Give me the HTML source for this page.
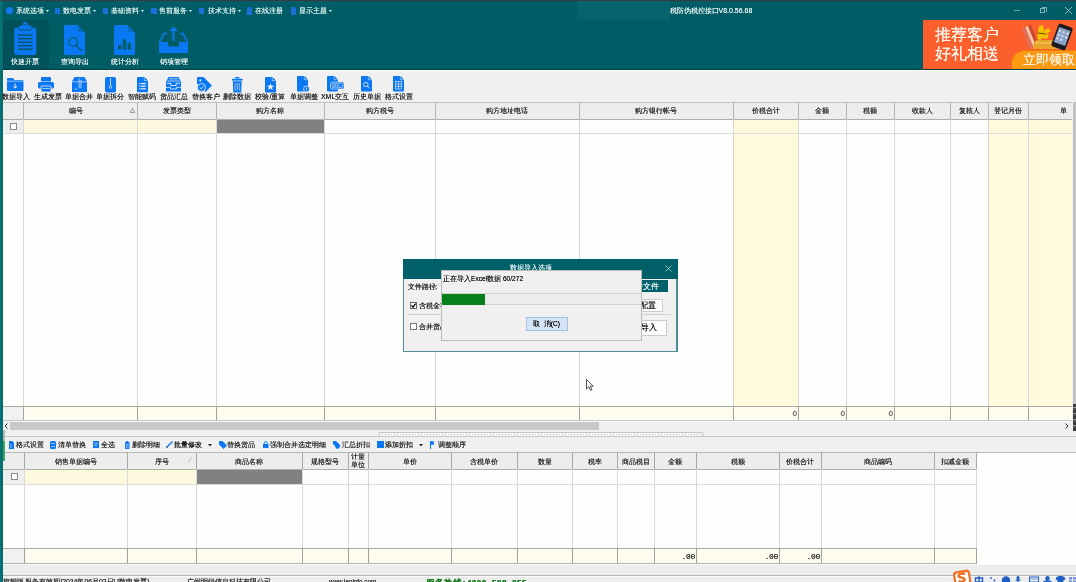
<!DOCTYPE html><html><head><meta charset="utf-8"><style>
html,body{margin:0;padding:0;}
body{width:1076px;height:582px;overflow:hidden;position:relative;background:#f0f0f0;font-family:"Liberation Sans",sans-serif;}
body div{position:absolute;box-sizing:border-box;}
#root{left:0;top:0;width:1076px;height:582px;overflow:hidden;will-change:transform;}
.t{white-space:nowrap;line-height:1;text-shadow:0 0 .4px;}
svg{position:absolute;overflow:visible;}
</style></head><body><div id="root">
<div style="left:0px;top:0px;width:1076px;height:70px;background:#005d66;"></div>
<div style="left:0px;top:0px;width:1076px;height:1px;background:#3a3b42;"></div>
<div style="left:577px;top:1px;width:93px;height:19px;background:#05646c;"></div>
<div style="left:0px;top:69px;width:1076px;height:1px;background:#003f46;"></div>
<div style="left:0px;top:70px;width:1076px;height:1px;background:#fbfbfb;"></div>
<div style="left:6px;top:7px;width:7px;height:7px;background:#0d7af6;border-radius:50%;"></div>
<div class="t" style="left:15.5px;top:6.5px;font-size:7px;color:#d2eaea;">系统选项</div>
<svg style="left:45.5px;top:10px" width="3" height="2"><path d="M0 0H3L1.5 2Z" fill="#e6f2f2"/></svg>
<div style="left:54.5px;top:8px;width:5.5px;height:5.5px;background:#1a6fd8;"></div>
<div class="t" style="left:63px;top:6.5px;font-size:7px;color:#d2eaea;">数电发票</div>
<svg style="left:93px;top:10px" width="3" height="2"><path d="M0 0H3L1.5 2Z" fill="#e6f2f2"/></svg>
<div style="left:102.5px;top:8px;width:5.5px;height:5.5px;background:#1a6fd8;"></div>
<div class="t" style="left:110.5px;top:6.5px;font-size:7px;color:#d2eaea;">基础资料</div>
<svg style="left:140.5px;top:10px" width="3" height="2"><path d="M0 0H3L1.5 2Z" fill="#e6f2f2"/></svg>
<div style="left:151px;top:8px;width:5.5px;height:5.5px;background:#1a6fd8;"></div>
<div class="t" style="left:159px;top:6.5px;font-size:7px;color:#d2eaea;">售前服务</div>
<svg style="left:189px;top:10px" width="3" height="2"><path d="M0 0H3L1.5 2Z" fill="#e6f2f2"/></svg>
<div style="left:198.5px;top:8px;width:5.5px;height:5.5px;background:#1a6fd8;"></div>
<div class="t" style="left:207.5px;top:6.5px;font-size:7px;color:#d2eaea;">技术支持</div>
<svg style="left:237.5px;top:10px" width="3" height="2"><path d="M0 0H3L1.5 2Z" fill="#e6f2f2"/></svg>
<div style="left:247px;top:7px;width:5px;height:7.5px;background:#1a6fd8;border-radius:1px 2px 0 0;"></div>
<div class="t" style="left:255px;top:6.5px;font-size:7px;color:#d2eaea;">在线注册</div>
<div style="left:291px;top:7px;width:5px;height:7.5px;background:#1a6fd8;border-radius:1px 2px 0 0;"></div>
<div class="t" style="left:299px;top:6.5px;font-size:7px;color:#d2eaea;">显示主题</div>
<svg style="left:329px;top:10px" width="3" height="2"><path d="M0 0H3L1.5 2Z" fill="#e6f2f2"/></svg>
<div class="t" style="left:669.5px;top:6.5px;font-size:7px;color:#e2efef;">税防伪税控接口V8.0.56.68</div>
<div style="left:1014px;top:10px;width:6px;height:1px;background:#6fa3a8;"></div>
<div style="left:1040px;top:8px;width:5px;height:5px;border:1px solid #7fb0b4;"></div>
<div style="left:1041.5px;top:6.5px;width:5px;height:5px;border-top:1px solid #7fb0b4;border-right:1px solid #7fb0b4;"></div>
<svg style="left:1065px;top:7px" width="7" height="7"><path d="M0 0L7 7M7 0L0 7" stroke="#9cc2c5" stroke-width=".9"/></svg>
<div style="left:3px;top:20px;width:46px;height:49px;background:#00525a;"></div>
<svg style="left:14px;top:22px" width="23" height="33" viewBox="0 0 23 33">
<rect x="0.3" y="5.5" width="22" height="27.5" rx="2.5" fill="#0a78f2"/>
<rect x="4.5" y="3" width="13.5" height="5" rx="2" fill="#0a78f2" stroke="#00525a" stroke-width=".8"/>
<circle cx="11.25" cy="2.3" r="2.2" fill="#0a78f2"/>
<circle cx="11.25" cy="2.5" r=".8" fill="#00525a"/>
<g fill="#00525a"><rect x="4" y="12.5" width="14.5" height="1.3"/><rect x="4" y="16" width="14.5" height="1.3"/><rect x="4" y="19.5" width="14.5" height="1.3"/><rect x="4" y="23" width="14.5" height="1.3"/><rect x="4" y="26.5" width="14.5" height="1.3"/></g>
</svg>
<div class="t" style="left:10.5px;top:57.5px;font-size:7px;color:#e8f2f2;">快速开票</div>
<svg style="left:64px;top:25px" width="21" height="30" viewBox="0 0 21 30">
<path d="M1.5 0H13.5L21 7.5V28.5Q21 30 19.5 30H1.5Q0 30 0 28.5V1.5Q0 0 1.5 0Z" fill="#0a78f2"/>
<path d="M14 0.2V7H20.8Z" fill="#005d66" opacity="0.35"/>
<circle cx="9" cy="17" r="4.3" fill="none" stroke="#005d66" stroke-width="1.2"/>
<path d="M12 20.3L17.5 26" stroke="#005d66" stroke-width="1.3"/>
</svg>
<div class="t" style="left:61px;top:57.5px;font-size:7px;color:#e8f2f2;">查询导出</div>
<svg style="left:114px;top:25px" width="21" height="30" viewBox="0 0 21 30">
<path d="M1.5 0H13.5L21 7.5V28.5Q21 30 19.5 30H1.5Q0 30 0 28.5V1.5Q0 0 1.5 0Z" fill="#0a78f2"/>
<path d="M14 0.2V7H20.8Z" fill="#005d66" opacity="0.35"/>
<rect x="4" y="20" width="3.4" height="4.5" fill="#005d66"/>
<rect x="8.8" y="14.5" width="3.4" height="10" fill="#005d66"/>
<rect x="13.6" y="18" width="3.4" height="6.5" fill="#005d66"/>
</svg>
<div class="t" style="left:110.5px;top:57.5px;font-size:7px;color:#e8f2f2;">统计分析</div>
<svg style="left:159px;top:26px" width="29" height="27" viewBox="0 0 29 27">
<path d="M14.5 0.5L10 5H13.5V15H15.5V5H19Z" fill="#0a78f2"/>
<path d="M8 7.5H5L0.7 16" stroke="#0a78f2" stroke-width="1.6" fill="none"/>
<path d="M21 7.5H24L28.3 16" stroke="#0a78f2" stroke-width="1.6" fill="none"/>
<path d="M0 16H9V20.5H20V16H29V27H0Z" fill="#0a78f2"/>
</svg>
<div class="t" style="left:160px;top:57.5px;font-size:7px;color:#e8f2f2;">销项管理</div>
<div style="left:923px;top:20px;width:153px;height:49px;background:#fc5e2c;overflow:hidden;"></div>
<div class="t" style="left:935px;top:27px;font-size:15.5px;color:#fff6ee;">推荐客户</div>
<div class="t" style="left:935px;top:46px;font-size:15.5px;color:#fff6ee;">好礼相送</div>
<div style="left:1010.5px;top:49.5px;width:66px;height:19.5px;background:#fd9a14;border-top:1px solid #ef7a12;border-left:1px solid #ef7a12;border-radius:14px 0 0 0;"></div>
<div class="t" style="left:1023px;top:52.5px;font-size:13px;color:#fff4e6;">立即领取</div>
<svg style="left:1022px;top:22px" width="54" height="29" viewBox="0 0 54 29">
<g transform="rotate(-22 8 14)"><rect x="3" y="4" width="4" height="22" fill="#e0705a"/><rect x="7" y="4" width="3" height="22" fill="#f5c8a8"/><rect x="10" y="4" width="3" height="22" fill="#c84a30"/></g>
<path d="M17 4L21 3L22 9L26 6L29 9L24 12L27 13L25 17L20 16L18 19L15 16Z" fill="#f2c400"/>
<path d="M16 11L24 12" stroke="#6a4a00" stroke-width="1.2"/>
<path d="M12 20Q14 17 20 18H42L45 27H11Z" fill="#e9a52a"/>
<path d="M13 21H43" stroke="#f7d070" stroke-width="1"/>
<g transform="rotate(20 40 15)"><rect x="32.5" y="3" width="15" height="24" rx="2" fill="#1a1a1e"/><rect x="34" y="6.5" width="12" height="16" fill="#8aa2c8"/><g fill="#eef2fa" opacity=".8"><rect x="35" y="9" width="2" height="2"/><rect x="39" y="9" width="2" height="2"/><rect x="43" y="9" width="2" height="2"/><rect x="35" y="13" width="2" height="2"/><rect x="39" y="13" width="2" height="2"/><rect x="43" y="13" width="2" height="2"/><rect x="35" y="17" width="2" height="2"/><rect x="39" y="17" width="2" height="2"/></g></g>
</svg>
<div style="left:0px;top:1px;width:3px;height:581px;background:linear-gradient(90deg,#057676 0 1.5px,#086c6c 1.5px);"></div>
<svg style="left:7px;top:77.5px" width="16.5" height="13" viewBox="0 0 16.5 13"><path d="M0 1Q0 0 1 0H6L7.5 2H15.5Q16.5 2 16.5 3V12Q16.5 13 15.5 13H1Q0 13 0 12Z" fill="#0a78f2"/><path d="M0 3.2H16.5" stroke="#f0f0f0" stroke-width=".6"/><path d="M8.25 5.5V10M6.3 8.2L8.25 10.2L10.2 8.2" stroke="#f0f0f0" stroke-width=".9" fill="none"/></svg>
<div class="t" style="left:-3.75px;top:93px;width:40px;text-align:center;font-size:7px;color:#262626;">数据导入</div>
<svg style="left:38px;top:76.5px" width="16" height="15" viewBox="0 0 16 15"><rect x="3" y="0" width="10" height="4.5" rx="1" fill="#0a78f2"/><rect x="0" y="5" width="16" height="6.5" rx="1.5" fill="#0a78f2"/><rect x="3" y="9" width="10" height="6" rx=".8" fill="#0a78f2" stroke="#f0f0f0" stroke-width=".8"/><path d="M4.5 11.5H11.5" stroke="#f0f0f0" stroke-width=".7"/></svg>
<div class="t" style="left:27.5px;top:93px;width:40px;text-align:center;font-size:7px;color:#262626;">生成发票</div>
<svg style="left:71.5px;top:76.5px" width="15" height="15" viewBox="0 0 15 15"><path d="M2.5 0H12.5L15 4.5V15H0V4.5Z" fill="#0a78f2"/><path d="M0 4.8H15" stroke="#f0f0f0" stroke-width=".6"/><path d="M7 1.5V9.5Q7 11 8 11Q9 11 9 9.5V3" stroke="#f0f0f0" stroke-width=".7" fill="none"/><path d="M2.5 12H5" stroke="#f0f0f0" stroke-width=".6"/></svg>
<div class="t" style="left:59.05000000000001px;top:93px;width:40px;text-align:center;font-size:7px;color:#262626;">单据合并</div>
<svg style="left:105px;top:76.5px" width="11" height="15.5" viewBox="0 0 11 15.5"><rect x="0" y="0" width="11" height="15.5" rx="2" fill="#0a78f2"/><path d="M5.5 1V8.5" stroke="#f0f0f0" stroke-width=".8"/><circle cx="5.5" cy="10" r="1.3" fill="none" stroke="#f0f0f0" stroke-width=".7"/></svg>
<div class="t" style="left:90.44999999999999px;top:93px;width:40px;text-align:center;font-size:7px;color:#262626;">单据拆分</div>
<svg style="left:136.7px;top:76.7px" width="11" height="15.3" viewBox="0 0 11 15.3"><path d="M1 0H7.5L11 3.5V14.3Q11 15.3 10 15.3H1Q0 15.3 0 14.3V1Q0 0 1 0Z" fill="#0a78f2"/><path d="M7.3 0.3V3.7H10.7" stroke="#f0f0f0" stroke-width=".6" fill="none"/><g fill="#f0f0f0"><rect x="2.2" y="6" width="1.3" height="1.2"/><rect x="4.2" y="6" width="4.6" height="1.2"/><rect x="2.2" y="8.6" width="1.3" height="1.2"/><rect x="4.2" y="8.6" width="4.6" height="1.2"/><rect x="2.2" y="11.2" width="1.3" height="1.2"/><rect x="4.2" y="11.2" width="4.6" height="1.2"/></g></svg>
<div class="t" style="left:122.30000000000001px;top:93px;width:40px;text-align:center;font-size:7px;color:#262626;">智能赋码</div>
<svg style="left:165.5px;top:77px" width="15" height="14.5" viewBox="0 0 15 14.5"><path d="M2.5 0H12.5L15 5V14.5H0V5Z" fill="#0a78f2"/><path d="M3 1.8H12M1.5 4H13.5" stroke="#f0f0f0" stroke-width=".7"/><path d="M0.8 6.2H4.8V8.5H10.2V6.2H14.2" stroke="#f0f0f0" stroke-width=".9" fill="none"/><path d="M0 10.3H4.5V12H10.5V10.3H15" stroke="#f0f0f0" stroke-width=".8" fill="none"/></svg>
<div class="t" style="left:153.65px;top:93px;width:40px;text-align:center;font-size:7px;color:#262626;">货品汇总</div>
<svg style="left:197.3px;top:76.7px" width="15" height="15" viewBox="0 0 15 15"><path d="M0 1Q0 0 1 0H6.5L15 8.5L8.5 15L0 6.5Z" fill="#0a78f2"/><circle cx="3.3" cy="3.3" r="1.1" fill="#f0f0f0"/><circle cx="4.5" cy="10.5" r="4" fill="#0a78f2" stroke="#f0f0f0" stroke-width=".8"/><path d="M2.7 10.5L4.1 11.9L6.5 9.2" stroke="#f0f0f0" stroke-width=".8" fill="none"/></svg>
<div class="t" style="left:185.5px;top:93px;width:40px;text-align:center;font-size:7px;color:#262626;">替换客户</div>
<svg style="left:231.5px;top:76.5px" width="10.5" height="15.5" viewBox="0 0 10.5 15.5"><rect x="3" y="0" width="4.5" height="1.5" rx=".5" fill="#0a78f2"/><rect x="0" y="1.8" width="10.5" height="1.8" fill="#0a78f2"/><path d="M0.8 4.2H9.7L9.2 15.5H1.3Z" fill="#0a78f2"/><path d="M3.2 6V13.5M5.25 6V13.5M7.3 6V13.5" stroke="#f0f0f0" stroke-width=".6"/></svg>
<div class="t" style="left:217.10000000000002px;top:93px;width:40px;text-align:center;font-size:7px;color:#262626;">删除数据</div>
<svg style="left:265px;top:76.5px" width="11" height="15.5" viewBox="0 0 11 15.5"><path d="M1 0H7.5L11 3.5V14.5Q11 15.5 10 15.5H1Q0 15.5 0 14.5V1Q0 0 1 0Z" fill="#0a78f2"/><path d="M7.3 0.3V3.7H10.7" stroke="#f0f0f0" stroke-width=".6" fill="none"/><path d="M5.5 6.2L6.5 8.8H9.2L7 10.4L7.8 13L5.5 11.4L3.2 13L4 10.4L1.8 8.8H4.5Z" fill="#f0f0f0"/></svg>
<div class="t" style="left:250.39999999999998px;top:93px;width:40px;text-align:center;font-size:7px;color:#262626;">校验/重算</div>
<svg style="left:297px;top:76.3px" width="12.5" height="16" viewBox="0 0 12.5 16"><path d="M1 0H7.5L11 3.5V14.5Q11 15.5 10 15.5H1Q0 15.5 0 14.5V1Q0 0 1 0Z" fill="#0a78f2"/><path d="M7.3 0.3V3.7H10.7" stroke="#f0f0f0" stroke-width=".6" fill="none"/><circle cx="9.5" cy="13" r="3" fill="#0a78f2" stroke="#f0f0f0" stroke-width=".7"/><path d="M9.5 11.5V14.3" stroke="#f0f0f0" stroke-width=".7"/></svg>
<div class="t" style="left:283.75px;top:93px;width:40px;text-align:center;font-size:7px;color:#262626;">单据调整</div>
<svg style="left:326.6px;top:76.3px" width="17" height="15.5" viewBox="0 0 17 15.5"><path d="M1 0H7.5L11 3.5V14.5Q11 15.5 10 15.5H1Q0 15.5 0 14.5V1Q0 0 1 0Z" fill="#0a78f2"/><path d="M7.3 0.3V3.7H10.7" stroke="#f0f0f0" stroke-width=".6" fill="none"/><rect x="3.5" y="6" width="13.5" height="7" rx="1.5" fill="#0a78f2" stroke="#f0f0f0" stroke-width=".6"/><rect x="5" y="7.4" width="10.5" height="4.2" rx=".8" fill="none" stroke="#f0f0f0" stroke-width=".5"/><path d="M6 8.3L7.6 10.8M7.6 8.3L6 10.8M8.5 10.8V8.3L9.6 9.8L10.7 8.3V10.8M11.8 8.3V10.8H13.8" stroke="#f0f0f0" stroke-width=".45" fill="none"/></svg>
<div class="t" style="left:315.1px;top:93px;width:40px;text-align:center;font-size:7px;color:#262626;">XML交互</div>
<svg style="left:361.4px;top:76.3px" width="11" height="15.5" viewBox="0 0 11 15.5"><path d="M1 0H7.5L11 3.5V14.5Q11 15.5 10 15.5H1Q0 15.5 0 14.5V1Q0 0 1 0Z" fill="#0a78f2"/><path d="M7.3 0.3V3.7H10.7" stroke="#f0f0f0" stroke-width=".6" fill="none"/><circle cx="4.8" cy="8.5" r="2.2" fill="none" stroke="#f0f0f0" stroke-width=".8"/><path d="M6.4 10.1L8.5 12.3" stroke="#f0f0f0" stroke-width=".9"/></svg>
<div class="t" style="left:346.95px;top:93px;width:40px;text-align:center;font-size:7px;color:#262626;">历史单据</div>
<svg style="left:393px;top:76.3px" width="11" height="15.5" viewBox="0 0 11 15.5"><path d="M1 0H7.5L11 3.5V14.5Q11 15.5 10 15.5H1Q0 15.5 0 14.5V1Q0 0 1 0Z" fill="#0a78f2"/><path d="M7.3 0.3V3.7H10.7" stroke="#f0f0f0" stroke-width=".6" fill="none"/><rect x="2.5" y="5.5" width="6" height="7.5" fill="none" stroke="#f0f0f0" stroke-width=".6"/><path d="M5.5 5.5V13M2.5 8H8.5M2.5 10.5H8.5" stroke="#f0f0f0" stroke-width=".6"/></svg>
<div class="t" style="left:378.5px;top:93px;width:40px;text-align:center;font-size:7px;color:#262626;">格式设置</div>
<div style="left:3px;top:119px;width:1069px;height:301px;background:#fefefc;"></div>
<div style="left:733px;top:119px;width:65px;height:287px;background:#fefadb;"></div>
<div style="left:988px;top:119px;width:40px;height:287px;background:#fefadb;"></div>
<div style="left:1028px;top:119px;width:44px;height:287px;background:#fefadb;"></div>
<div style="left:23px;top:119px;width:114px;height:14px;background:#fdf9de;"></div>
<div style="left:137px;top:119px;width:79px;height:14px;background:#fdf9de;"></div>
<div style="left:216px;top:120px;width:108px;height:13px;background:#818181;"></div>
<div style="left:3px;top:119px;width:20px;height:14px;background:#eeeeee;"></div>
<div style="left:3px;top:133px;width:20px;height:273px;background:#fefefc;"></div>
<div style="left:3px;top:406px;width:1069px;height:14px;background:#fefbef;"></div>
<div style="left:3px;top:406px;width:20px;height:14px;background:#f1f1f1;"></div>
<div style="left:3px;top:102px;width:1069px;height:17px;background:#ededed;"></div>
<div style="left:3px;top:102px;width:1069px;height:1px;background:#c4c4c4;"></div>
<div style="left:3px;top:119px;width:1069px;height:1px;background:#b0aea4;"></div>
<div style="left:3px;top:133px;width:1069px;height:1px;background:#dadada;"></div>
<div style="left:3px;top:406px;width:1069px;height:1px;background:#aaa9a2;"></div>
<div style="left:3px;top:420px;width:1069px;height:1px;background:#c4c4c4;"></div>
<div style="left:23px;top:102px;width:1px;height:17px;background:#b4b4b4;"></div>
<div style="left:23px;top:119px;width:1px;height:287px;background:#d8d8d8;"></div>
<div style="left:23px;top:406px;width:1px;height:14px;background:#a4a29a;"></div>
<div style="left:137px;top:102px;width:1px;height:17px;background:#b4b4b4;"></div>
<div style="left:137px;top:119px;width:1px;height:287px;background:#d8d8d8;"></div>
<div style="left:137px;top:406px;width:1px;height:14px;background:#a4a29a;"></div>
<div style="left:216px;top:102px;width:1px;height:17px;background:#b4b4b4;"></div>
<div style="left:216px;top:119px;width:1px;height:287px;background:#d8d8d8;"></div>
<div style="left:216px;top:406px;width:1px;height:14px;background:#a4a29a;"></div>
<div style="left:324px;top:102px;width:1px;height:17px;background:#b4b4b4;"></div>
<div style="left:324px;top:119px;width:1px;height:287px;background:#d8d8d8;"></div>
<div style="left:324px;top:406px;width:1px;height:14px;background:#a4a29a;"></div>
<div style="left:435px;top:102px;width:1px;height:17px;background:#b4b4b4;"></div>
<div style="left:435px;top:119px;width:1px;height:287px;background:#d8d8d8;"></div>
<div style="left:435px;top:406px;width:1px;height:14px;background:#a4a29a;"></div>
<div style="left:579px;top:102px;width:1px;height:17px;background:#b4b4b4;"></div>
<div style="left:579px;top:119px;width:1px;height:287px;background:#d8d8d8;"></div>
<div style="left:579px;top:406px;width:1px;height:14px;background:#a4a29a;"></div>
<div style="left:733px;top:102px;width:1px;height:17px;background:#b4b4b4;"></div>
<div style="left:733px;top:119px;width:1px;height:287px;background:#d8d8d8;"></div>
<div style="left:733px;top:406px;width:1px;height:14px;background:#a4a29a;"></div>
<div style="left:798px;top:102px;width:1px;height:17px;background:#b4b4b4;"></div>
<div style="left:798px;top:119px;width:1px;height:287px;background:#d8d8d8;"></div>
<div style="left:798px;top:406px;width:1px;height:14px;background:#a4a29a;"></div>
<div style="left:846px;top:102px;width:1px;height:17px;background:#b4b4b4;"></div>
<div style="left:846px;top:119px;width:1px;height:287px;background:#d8d8d8;"></div>
<div style="left:846px;top:406px;width:1px;height:14px;background:#a4a29a;"></div>
<div style="left:894px;top:102px;width:1px;height:17px;background:#b4b4b4;"></div>
<div style="left:894px;top:119px;width:1px;height:287px;background:#d8d8d8;"></div>
<div style="left:894px;top:406px;width:1px;height:14px;background:#a4a29a;"></div>
<div style="left:950px;top:102px;width:1px;height:17px;background:#b4b4b4;"></div>
<div style="left:950px;top:119px;width:1px;height:287px;background:#d8d8d8;"></div>
<div style="left:950px;top:406px;width:1px;height:14px;background:#a4a29a;"></div>
<div style="left:988px;top:102px;width:1px;height:17px;background:#b4b4b4;"></div>
<div style="left:988px;top:119px;width:1px;height:287px;background:#d8d8d8;"></div>
<div style="left:988px;top:406px;width:1px;height:14px;background:#a4a29a;"></div>
<div style="left:1028px;top:102px;width:1px;height:17px;background:#b4b4b4;"></div>
<div style="left:1028px;top:119px;width:1px;height:287px;background:#d8d8d8;"></div>
<div style="left:1028px;top:406px;width:1px;height:14px;background:#a4a29a;"></div>
<div class="t" style="left:23px;top:107px;width:105px;text-align:center;font-size:7.2px;color:#2a2a2a;">编号</div>
<div class="t" style="left:137px;top:107px;width:79px;text-align:center;font-size:7.2px;color:#2a2a2a;">发票类型</div>
<div class="t" style="left:216px;top:107px;width:108px;text-align:center;font-size:7.2px;color:#2a2a2a;">购方名称</div>
<div class="t" style="left:324px;top:107px;width:111px;text-align:center;font-size:7.2px;color:#2a2a2a;">购方税号</div>
<div class="t" style="left:435px;top:107px;width:144px;text-align:center;font-size:7.2px;color:#2a2a2a;">购方地址电话</div>
<div class="t" style="left:579px;top:107px;width:154px;text-align:center;font-size:7.2px;color:#2a2a2a;">购方银行帐号</div>
<div class="t" style="left:733px;top:107px;width:65px;text-align:center;font-size:7.2px;color:#2a2a2a;">价税合计</div>
<div class="t" style="left:798px;top:107px;width:48px;text-align:center;font-size:7.2px;color:#2a2a2a;">金额</div>
<div class="t" style="left:846px;top:107px;width:48px;text-align:center;font-size:7.2px;color:#2a2a2a;">税额</div>
<div class="t" style="left:894px;top:107px;width:56px;text-align:center;font-size:7.2px;color:#2a2a2a;">收款人</div>
<div class="t" style="left:950px;top:107px;width:38px;text-align:center;font-size:7.2px;color:#2a2a2a;">复核人</div>
<div class="t" style="left:988px;top:107px;width:40px;text-align:center;font-size:7.2px;color:#2a2a2a;">登记月份</div>
<div class="t" style="left:1028px;top:107px;width:39px;text-align:right;font-size:7.2px;color:#2a2a2a;">单</div>
<svg style="left:129.5px;top:108px" width="5" height="5"><path d="M2.5 0.3L4.7 4.5H0.3Z" fill="none" stroke="#777" stroke-width=".7"/></svg>
<div style="left:10px;top:123px;width:7px;height:7px;border:1px solid #8a8a8a;background:#fff;"></div>
<div class="t" style="left:768px;top:410px;width:29px;text-align:right;font-size:8px;color:#222;text-shadow:none;">0</div>
<div class="t" style="left:816px;top:410px;width:29px;text-align:right;font-size:8px;color:#222;text-shadow:none;">0</div>
<div class="t" style="left:864px;top:410px;width:29px;text-align:right;font-size:8px;color:#222;text-shadow:none;">0</div>
<div style="left:1072.5px;top:102px;width:3.5px;height:329px;background:#c4c4c4;"></div>
<div style="left:1073px;top:404px;width:3px;height:26.5px;background:repeating-linear-gradient(180deg,#3a3a3a 0 3px,#9a9a9a 3px 4.5px,#505050 4.5px 6px);"></div>
<div style="left:3px;top:421px;width:1069px;height:10px;background:#efefef;"></div>
<div style="left:3px;top:421px;width:1069px;height:1px;background:#fafafa;"></div>
<div style="left:10px;top:421.5px;width:589px;height:8.5px;background:#c8c8c8;"></div>
<svg style="left:4px;top:423px" width="4" height="6"><path d="M3.5 0.5L1 3L3.5 5.5" stroke="#333" stroke-width="1" fill="none"/></svg>
<svg style="left:1065px;top:423px" width="4" height="6"><path d="M0.5 0.5L3 3L0.5 5.5" stroke="#333" stroke-width="1" fill="none"/></svg>
<div style="left:3px;top:431px;width:1073px;height:6px;background:#f0f0f0;"></div>
<div style="left:379px;top:431.5px;width:325px;height:5.5px;border:1px solid #c4c4c4;border-radius:0 3px 3px 0;background:#f8f8f8;"></div>
<div style="left:380px;top:433.5px;width:322px;height:1.2px;background:repeating-linear-gradient(90deg,#fff 0 2px,#a8a8a8 2px 3px);"></div>
<div style="left:3px;top:436px;width:1073px;height:1px;background:#c8c8c8;"></div>
<div style="left:3px;top:437px;width:1073px;height:15px;background:#f0f0f0;"></div>
<svg style="left:8.5px;top:441px" width="5" height="8" viewBox="0 0 5 8"><path d="M0 0H3.3L5 1.7V8H0Z" fill="#0a78f2"/><path d="M2 3V7" stroke="#f0f0f0" stroke-width=".6"/></svg>
<div class="t" style="left:15.6px;top:441px;font-size:7px;color:#2e2e2e;">格式设置</div>
<svg style="left:50.2px;top:441px" width="6" height="8" viewBox="0 0 6 8"><rect x="0" y="0" width="6" height="8" rx="1.5" fill="#0a78f2"/><path d="M1 2.5H5M1 5.5H5" stroke="#f0f0f0" stroke-width=".6"/></svg>
<div class="t" style="left:58.4px;top:441px;font-size:7px;color:#2e2e2e;">清单替换</div>
<svg style="left:92.6px;top:441px" width="6" height="7" viewBox="0 0 6 7"><rect x="0" y="0" width="6" height="7" fill="#0a78f2"/><path d="M1 2.3H5M1 4.3H4" stroke="#f0f0f0" stroke-width=".6"/></svg>
<div class="t" style="left:100.8px;top:441px;font-size:7px;color:#2e2e2e;">全选</div>
<svg style="left:125.4px;top:441px" width="4.5" height="8" viewBox="0 0 4.5 8"><rect x="0" y="1" width="4.5" height="7" rx=".8" fill="#0a78f2"/><rect x="1.3" y="0" width="2" height="1.3" fill="#0a78f2"/><path d="M1.5 2.5V7M3 2.5V7" stroke="#f0f0f0" stroke-width=".5"/></svg>
<div class="t" style="left:132px;top:441px;font-size:7px;color:#2e2e2e;">删除明细</div>
<svg style="left:166.2px;top:441px" width="7" height="7" viewBox="0 0 7 7"><path d="M0.5 6.5L6.5 0.5" stroke="#0a78f2" stroke-width="1.5"/><path d="M0 7L0.7 5.3L1.7 6.3Z" fill="#333"/></svg>
<div class="t" style="left:174.4px;top:441px;font-size:7px;font-weight:bold;color:#1a1a1a;text-shadow:none;">批量修改</div>
<svg style="left:208.3px;top:444px" width="4" height="3"><path d="M0 0H4L2 2.5Z" fill="#222"/></svg>
<svg style="left:218.5px;top:441px" width="8" height="8" viewBox="0 0 8 8"><path d="M0 0.5Q0 0 .5 0H3.5L8 4.5L4.5 8L0 3.5Z" fill="#0a78f2"/></svg>
<div class="t" style="left:227.4px;top:441px;font-size:7px;color:#2e2e2e;">替换货品</div>
<svg style="left:262.7px;top:441px" width="5.5" height="7" viewBox="0 0 5.5 7"><rect x="0" y="3" width="5.5" height="4" fill="#0a78f2"/><path d="M1.2 3V2Q1.2 0.5 2.75 0.5Q4.3 .5 4.3 2V3" stroke="#0a78f2" stroke-width=".9" fill="none"/></svg>
<div class="t" style="left:270.4px;top:441px;font-size:7px;color:#2e2e2e;">强制合并选定明细</div>
<svg style="left:332.8px;top:441px" width="7.5" height="8" viewBox="0 0 7.5 8"><path d="M0 0H3L7.5 4.5L4.5 7.5L0 3Z" fill="#0a78f2"/><circle cx="4.5" cy="5.5" r="2.2" fill="#0a78f2"/></svg>
<div class="t" style="left:342.4px;top:441px;font-size:7px;color:#2e2e2e;">汇总折扣</div>
<svg style="left:377.2px;top:441px" width="7" height="7" viewBox="0 0 7 7"><rect x="0" y="0" width="7" height="7" fill="#0a78f2"/></svg>
<div class="t" style="left:385.2px;top:441px;font-size:7px;font-weight:bold;color:#1a1a1a;text-shadow:none;">添加折扣</div>
<svg style="left:419.09999999999997px;top:444px" width="4" height="3"><path d="M0 0H4L2 2.5Z" fill="#222"/></svg>
<svg style="left:430.4px;top:441px" width="4.5" height="8" viewBox="0 0 4.5 8"><path d="M0.5 0V8" stroke="#0a78f2" stroke-width="1"/><path d="M1 0.3H4.5L3.5 2L4.5 3.7H1Z" fill="#0a78f2"/></svg>
<div class="t" style="left:438.4px;top:441px;font-size:7px;color:#2e2e2e;">调整顺序</div>
<div style="left:3px;top:452px;width:1073px;height:130px;background:#fefefc;"></div>
<div style="left:3px;top:469px;width:21px;height:15px;background:#eeeeee;"></div>
<div style="left:24px;top:469px;width:103px;height:15px;background:#fdf9de;"></div>
<div style="left:127px;top:469px;width:69px;height:15px;background:#fdf9de;"></div>
<div style="left:196px;top:470px;width:106px;height:14px;background:#818181;"></div>
<div style="left:3px;top:548px;width:974px;height:15px;background:#fefbef;"></div>
<div style="left:3px;top:548px;width:21px;height:15px;background:#f1f1f1;"></div>
<div style="left:3px;top:452px;width:974px;height:17px;background:#ededed;"></div>
<div style="left:3px;top:452px;width:1073px;height:1px;background:#b8b8b8;"></div>
<div style="left:3px;top:469px;width:974px;height:1px;background:#b0aea4;"></div>
<div style="left:3px;top:484px;width:974px;height:1px;background:#dadada;"></div>
<div style="left:3px;top:548px;width:974px;height:1px;background:#aaa9a2;"></div>
<div style="left:3px;top:563px;width:974px;height:1px;background:#b4b4b4;"></div>
<div style="left:24px;top:452px;width:1px;height:17px;background:#a8a8a8;"></div>
<div style="left:24px;top:469px;width:1px;height:79px;background:#d8d8d8;"></div>
<div style="left:24px;top:548px;width:1px;height:15px;background:#a4a29a;"></div>
<div style="left:127px;top:452px;width:1px;height:17px;background:#a8a8a8;"></div>
<div style="left:127px;top:469px;width:1px;height:79px;background:#d8d8d8;"></div>
<div style="left:127px;top:548px;width:1px;height:15px;background:#a4a29a;"></div>
<div style="left:196px;top:452px;width:1px;height:17px;background:#a8a8a8;"></div>
<div style="left:196px;top:469px;width:1px;height:79px;background:#d8d8d8;"></div>
<div style="left:196px;top:548px;width:1px;height:15px;background:#a4a29a;"></div>
<div style="left:302px;top:452px;width:1px;height:17px;background:#a8a8a8;"></div>
<div style="left:302px;top:469px;width:1px;height:79px;background:#d8d8d8;"></div>
<div style="left:302px;top:548px;width:1px;height:15px;background:#a4a29a;"></div>
<div style="left:348px;top:452px;width:1px;height:17px;background:#a8a8a8;"></div>
<div style="left:348px;top:469px;width:1px;height:79px;background:#d8d8d8;"></div>
<div style="left:348px;top:548px;width:1px;height:15px;background:#a4a29a;"></div>
<div style="left:368px;top:452px;width:1px;height:17px;background:#a8a8a8;"></div>
<div style="left:368px;top:469px;width:1px;height:79px;background:#d8d8d8;"></div>
<div style="left:368px;top:548px;width:1px;height:15px;background:#a4a29a;"></div>
<div style="left:451px;top:452px;width:1px;height:17px;background:#a8a8a8;"></div>
<div style="left:451px;top:469px;width:1px;height:79px;background:#d8d8d8;"></div>
<div style="left:451px;top:548px;width:1px;height:15px;background:#a4a29a;"></div>
<div style="left:517px;top:452px;width:1px;height:17px;background:#a8a8a8;"></div>
<div style="left:517px;top:469px;width:1px;height:79px;background:#d8d8d8;"></div>
<div style="left:517px;top:548px;width:1px;height:15px;background:#a4a29a;"></div>
<div style="left:572px;top:452px;width:1px;height:17px;background:#a8a8a8;"></div>
<div style="left:572px;top:469px;width:1px;height:79px;background:#d8d8d8;"></div>
<div style="left:572px;top:548px;width:1px;height:15px;background:#a4a29a;"></div>
<div style="left:617px;top:452px;width:1px;height:17px;background:#a8a8a8;"></div>
<div style="left:617px;top:469px;width:1px;height:79px;background:#d8d8d8;"></div>
<div style="left:617px;top:548px;width:1px;height:15px;background:#a4a29a;"></div>
<div style="left:654px;top:452px;width:1px;height:17px;background:#a8a8a8;"></div>
<div style="left:654px;top:469px;width:1px;height:79px;background:#d8d8d8;"></div>
<div style="left:654px;top:548px;width:1px;height:15px;background:#a4a29a;"></div>
<div style="left:696px;top:452px;width:1px;height:17px;background:#a8a8a8;"></div>
<div style="left:696px;top:469px;width:1px;height:79px;background:#d8d8d8;"></div>
<div style="left:696px;top:548px;width:1px;height:15px;background:#a4a29a;"></div>
<div style="left:779px;top:452px;width:1px;height:17px;background:#a8a8a8;"></div>
<div style="left:779px;top:469px;width:1px;height:79px;background:#d8d8d8;"></div>
<div style="left:779px;top:548px;width:1px;height:15px;background:#a4a29a;"></div>
<div style="left:821px;top:452px;width:1px;height:17px;background:#a8a8a8;"></div>
<div style="left:821px;top:469px;width:1px;height:79px;background:#d8d8d8;"></div>
<div style="left:821px;top:548px;width:1px;height:15px;background:#a4a29a;"></div>
<div style="left:934px;top:452px;width:1px;height:17px;background:#a8a8a8;"></div>
<div style="left:934px;top:469px;width:1px;height:79px;background:#d8d8d8;"></div>
<div style="left:934px;top:548px;width:1px;height:15px;background:#a4a29a;"></div>
<div style="left:976px;top:452px;width:1px;height:17px;background:#a8a8a8;"></div>
<div style="left:976px;top:469px;width:1px;height:79px;background:#d8d8d8;"></div>
<div style="left:976px;top:548px;width:1px;height:15px;background:#a4a29a;"></div>
<div class="t" style="left:24px;top:457.5px;width:103px;text-align:center;font-size:7px;color:#2a2a2a;">销售单据编号</div>
<div class="t" style="left:127px;top:457.5px;width:69px;text-align:center;font-size:7px;color:#2a2a2a;">序号</div>
<div class="t" style="left:196px;top:457.5px;width:106px;text-align:center;font-size:7px;color:#2a2a2a;">商品名称</div>
<div class="t" style="left:302px;top:457.5px;width:46px;text-align:center;font-size:7px;color:#2a2a2a;">规格型号</div>
<div class="t" style="left:348px;top:453px;width:20px;text-align:center;font-size:7px;line-height:7.5px;color:#2a2a2a;">计量<br>单位</div>
<div class="t" style="left:368px;top:457.5px;width:83px;text-align:center;font-size:7px;color:#2a2a2a;">单价</div>
<div class="t" style="left:451px;top:457.5px;width:66px;text-align:center;font-size:7px;color:#2a2a2a;">含税单价</div>
<div class="t" style="left:517px;top:457.5px;width:55px;text-align:center;font-size:7px;color:#2a2a2a;">数量</div>
<div class="t" style="left:572px;top:457.5px;width:45px;text-align:center;font-size:7px;color:#2a2a2a;">税率</div>
<div class="t" style="left:617px;top:457.5px;width:37px;text-align:center;font-size:7px;color:#2a2a2a;">商品税目</div>
<div class="t" style="left:654px;top:457.5px;width:42px;text-align:center;font-size:7px;color:#2a2a2a;">金额</div>
<div class="t" style="left:696px;top:457.5px;width:83px;text-align:center;font-size:7px;color:#2a2a2a;">税额</div>
<div class="t" style="left:779px;top:457.5px;width:42px;text-align:center;font-size:7px;color:#2a2a2a;">价税合计</div>
<div class="t" style="left:821px;top:457.5px;width:113px;text-align:center;font-size:7px;color:#2a2a2a;">商品编码</div>
<div class="t" style="left:934px;top:457.5px;width:42px;text-align:center;font-size:7px;color:#2a2a2a;">扣减金额</div>
<svg style="left:188px;top:457px" width="4" height="6"><path d="M3.5 0.5L0.5 5.5" stroke="#999" stroke-width=".6"/></svg>
<div style="left:10.5px;top:473px;width:7px;height:7px;border:1px solid #8a8a8a;background:#fff;"></div>
<div class="t" style="left:656px;top:552.5px;width:39px;text-align:right;font-size:8px;letter-spacing:-.3px;font-family:'Liberation Mono',monospace;color:#333;">.00</div>
<div class="t" style="left:739px;top:552.5px;width:39px;text-align:right;font-size:8px;letter-spacing:-.3px;font-family:'Liberation Mono',monospace;color:#333;">.00</div>
<div class="t" style="left:781px;top:552.5px;width:39px;text-align:right;font-size:8px;letter-spacing:-.3px;font-family:'Liberation Mono',monospace;color:#333;">.00</div>
<div style="left:3px;top:564px;width:1073px;height:18px;background:#ededed;"></div>
<div style="left:3px;top:564px;width:1073px;height:1px;background:#fafafa;"></div>
<div style="left:3px;top:575px;width:1073px;height:1px;background:#b8b8b8;"></div>
<div style="left:3px;top:576px;width:1073px;height:1px;background:#fafafa;"></div>
<div class="t" style="left:2.5px;top:579px;font-size:6.8px;color:#333;">旗舰版 服务有效期[2024年06月02日] [数电发票]</div>
<div class="t" style="left:187px;top:579px;font-size:6.8px;color:#333;">广州明锐信息科技有限公司</div>
<div class="t" style="left:329px;top:579px;font-size:6.3px;color:#333;">www.leqinfo.com</div>
<div class="t" style="left:425.5px;top:578.5px;font-size:8.5px;font-weight:bold;color:#137a17;">服务热线<span style="font-family:Liberation Mono,monospace;font-size:8.4px">:4000-598-255</span></div>
<svg style="left:953px;top:570px" width="123" height="12" viewBox="0 0 123 12">
<g transform="rotate(-10 9 7)"><rect x="1.5" y="1.5" width="15" height="13" rx="3" fill="#fff" stroke="#f07020" stroke-width="2.2"/>
<path d="M12.5 4.5Q9 2.5 6 4.5Q5 6.5 8.5 7.5Q12 8.5 11 10.5Q8 12.5 5 10.5" stroke="#f07020" stroke-width="2.4" fill="none"/></g>
<g fill="#1d5fc4" stroke="#1d5fc4">
<path d="M22.5 8H29.5V12H22.5Z" fill="none" stroke-width="1.4"/><path d="M26 6V12" stroke-width="1.3"/>
<circle cx="38" cy="8" r=".9" stroke="none"/><circle cx="41.5" cy="10.5" r="1" stroke="none"/>
<circle cx="53" cy="10.5" r="4.2" stroke="none"/>
<rect x="63.5" y="6" width="3" height="5" rx="1.5" stroke="none"/><path d="M62.5 10Q65 13 67.5 10" fill="none" stroke-width=".8"/>
<rect x="76.5" y="7" width="9" height="5" fill="none" stroke-width="1"/><path d="M77.5 9H84.5" stroke-width=".6"/>
<circle cx="94.5" cy="8.3" r="2.2" stroke="none"/><path d="M90.5 12.5Q94.5 9.5 98.5 12.5" stroke-width="2" fill="none"/>
<path d="M103.5 7L106 6H109L111.5 7L112.5 9.5L110.5 10V12H104.5V10L102.5 9.5Z" stroke="none"/>
</g>
<g fill="#7a8ee0"><rect x="116" y="7" width="3" height="2.5"/><rect x="120" y="7" width="3" height="2.5"/><rect x="116" y="10.5" width="3" height="2.5"/><rect x="120" y="10.5" width="3" height="2.5"/></g>
</svg>
<div style="left:403px;top:259px;width:275px;height:93px;background:#f0f0f0;border:1px solid #4f8e94;border-right-width:2px;"></div>
<div style="left:403px;top:259px;width:275px;height:19.5px;background:#006069;"></div>
<div class="t" style="left:510px;top:264px;font-size:7px;color:#d8ecec;">数据导入选项</div>
<svg style="left:665px;top:265px" width="7" height="7"><path d="M0.5 0.5L6.5 6.5M6.5 0.5L0.5 6.5" stroke="#b5d3d6" stroke-width=".8"/></svg>
<div class="t" style="left:407.5px;top:283px;font-size:7px;color:#222;">文件路径:</div>
<div style="left:630px;top:280px;width:37.5px;height:12px;background:#006069;"></div>
<div class="t" style="left:620px;top:282.5px;width:47.5px;text-align:right;padding-right:9px;font-size:7.5px;color:#e8f4f4;">打开文件</div>
<div style="left:409.5px;top:302px;width:7px;height:7px;border:1px solid #666;background:#fff;"></div>
<svg style="left:410.5px;top:303px" width="5" height="5"><path d="M.5 2.4L2 4.2L4.6 .6" stroke="#000" stroke-width="1.2" fill="none"/></svg>
<div class="t" style="left:419px;top:302px;font-size:7px;color:#222;">含税金额</div>
<div style="left:630px;top:298.5px;width:33px;height:13px;background:#fcfcfc;border:1px solid #cbcbcb;"></div>
<div class="t" style="left:620px;top:302px;width:43px;text-align:right;padding-right:7px;font-size:7.5px;color:#222;">匹配配置</div>
<div style="left:407px;top:313.5px;width:264px;height:1px;background:#d0d0d0;"></div>
<div style="left:409.5px;top:323px;width:7px;height:7px;border:1px solid #777;background:#fff;"></div>
<div class="t" style="left:419px;top:322.5px;font-size:7px;color:#222;">合并货品</div>
<div style="left:630px;top:319.5px;width:36.5px;height:16px;background:#fcfcfc;border:1px solid #cbcbcb;"></div>
<div class="t" style="left:620px;top:323.5px;width:46.5px;text-align:right;padding-right:9.5px;font-size:7.5px;color:#222;">开始导入</div>
<div style="left:440.5px;top:270px;width:201px;height:71px;background:#f0f0f0;border:1px solid #bcbcbc;"></div>
<div class="t" style="left:443px;top:275.5px;font-size:6.6px;color:#222;">正在导入Excel数据 60/272</div>
<div style="left:441.5px;top:293px;width:199px;height:12px;background:#ececec;border-top:1px solid #d0d0d0;border-bottom:1px solid #d0d0d0;"></div>
<div style="left:442px;top:294px;width:42.5px;height:11px;background:#07801c;"></div>
<div style="left:525.5px;top:317px;width:42px;height:14px;background:#d5e3f5;border:1px solid #a3bfdf;"></div>
<div class="t" style="left:525.5px;top:320.5px;width:42px;text-align:center;font-size:6.5px;color:#111;">取&nbsp;&nbsp;消(C)</div>
<div style="left:3px;top:430px;width:1.6px;height:11px;background:#b8b8b8;"></div>
<div style="left:3px;top:441px;width:1.6px;height:20px;background:#3aa860;"></div>
<svg style="left:585.5px;top:379px" width="8" height="12"><path d="M0.5 0.5V10L2.8 7.8L4.5 11.3L6 10.6L4.3 7.2H7.3Z" fill="#fff" stroke="#222" stroke-width=".8"/></svg>
</div></body></html>
